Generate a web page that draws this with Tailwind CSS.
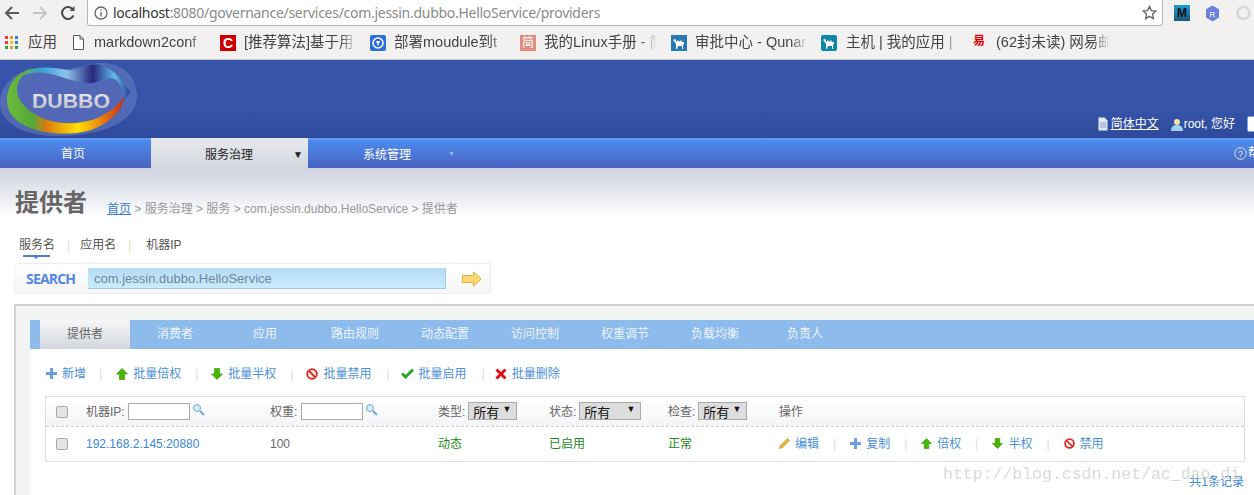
<!DOCTYPE html>
<html lang="en">
<head>
  <meta charset="UTF-8">
  <title>dubbo governance</title>
  <script src="https://cdn.jsdelivr.net/npm/@tailwindcss/browser@4"></script>
</head>
<body class="w-[1254px] h-[495px] overflow-hidden relative bg-white font-['Liberation_Sans','Noto_Sans_CJK_SC',sans-serif]">

  <!-- browser toolbar -->
  <div class="h-[27px] bg-[#f2f1f0] flex items-start">
    <div class="w-[87px] h-[26px] flex items-center shrink-0">
      <svg class="ml-[4px]" width="16" height="16" viewBox="0 0 16 16" fill="none" stroke="#5a5a5a" stroke-width="2"><path d="M15 8H2M8 2L2 8l6 6"/></svg>
      <svg class="ml-[12px]" width="16" height="16" viewBox="0 0 16 16" fill="none" stroke="#c4c4c4" stroke-width="2"><path d="M1 8h13M8 2l6 6-6 6"/></svg>
      <svg class="ml-[12px]" width="16" height="16" viewBox="0 0 16 16" fill="none" stroke="#4a4a4a" stroke-width="2"><path d="M13.5 10.5A6 6 0 1 1 13 4.5"/><path d="M14.5 1v5h-5" fill="#4a4a4a" stroke="none"/></svg>
    </div>
    <div class="w-[1076px] h-[26px] bg-white border border-t-0 border-[#b5b5b5] rounded-b-[3px] flex items-center shrink-0">
      <svg class="ml-[6px]" width="14" height="14" viewBox="0 0 14 14" fill="none" stroke="#666" stroke-width="1.3"><circle cx="7" cy="7" r="6"/><path d="M7 6v4.5M7 3.2v1.4"/></svg>
      <span class="ml-[5px] text-[14px] text-[#8a8a8a] font-['Noto_Sans',sans-serif] tracking-[-0.28px]"><span class="text-[#333]">localhost</span>:8080/governance/services/com.jessin.dubbo.HelloService/providers</span>
      <svg class="ml-auto mr-[5px]" width="15" height="15" viewBox="0 0 16 16" fill="none" stroke="#666" stroke-width="1.4"><path d="M8 1.5l2 4.5 4.8.5-3.6 3.2 1 4.8L8 12.1 3.800 14.5l1-4.800L1.200 6.500 6 6z"/></svg>
    </div>
    <div class="flex items-center h-[26px] ml-[11px] gap-[15px]">
      <div class="w-[16px] h-[16px] bg-[linear-gradient(#1c9fd6,#1c5a78)] text-[12px] font-bold text-[#111] text-center leading-[16px]">M</div>
      <svg width="15" height="17" viewBox="0 0 15 17"><path d="M7.5 0.5l6.500 3.700v8.200l-6.500 4-6.500-4V4.200z" fill="#6f7fe0"/><text x="7.500" y="11.500" font-size="8" fill="#fff" text-anchor="middle" font-family="Liberation Sans">R</text></svg>
      <svg width="17" height="16" viewBox="0 0 17 16" fill="none" stroke="#d8d8d8" stroke-width="2.500"><circle cx="8.500" cy="8" r="6"/></svg>
    </div>
  </div>

  <!-- bookmarks -->
  <div class="h-[33px] bg-[#f2f1f0] border-b border-[#c8c8c8] flex items-center text-[14.500px] text-[#444] pb-[1px] whitespace-nowrap">
    <div class="w-[72px] pl-[5px] flex items-center shrink-0">
      <div class="grid grid-cols-3 gap-[2px] w-[13px]">
        <i class="h-[3px] bg-[#d9432f]"></i><i class="h-[3px] bg-[#e8a020]"></i><i class="h-[3px] bg-[#3b78e7]"></i>
        <i class="h-[3px] bg-[#d9432f]"></i><i class="h-[3px] bg-[#e8c020]"></i><i class="h-[3px] bg-[#3b78e7]"></i>
        <i class="h-[3px] bg-[#2f9e48]"></i><i class="h-[3px] bg-[#e8a020]"></i><i class="h-[3px] bg-[#2f9e48]"></i>
      </div>
      <span class="ml-[10px]">应用</span>
    </div>
    <div class="w-[148px] flex items-center shrink-0">
      <svg class="ml-[1px]" width="11" height="15" viewBox="0 0 11 15" fill="#fff" stroke="#555"><path d="M.5.5h6.500l3.500 3.500v10.500H.5z"/><path d="M7 .5v3.500h3.500" fill="none"/></svg>
      <span class="ml-[10px] w-[112px] [mask-image:linear-gradient(90deg,#000_85%,transparent)]">markdown2conf</span>
    </div>
    <div class="w-[150px] flex items-center shrink-0">
      <div class="w-[16px] h-[16px] bg-[#cc0000] text-white font-bold text-[14px] leading-[16px] text-center">C</div>
      <span class="ml-[8px] w-[113px] [mask-image:linear-gradient(90deg,#000_85%,transparent)]">[推荐算法]基于用</span>
    </div>
    <div class="w-[150px] flex items-center shrink-0">
      <svg width="16" height="16" viewBox="0 0 16 16"><rect width="16" height="16" rx="2" fill="#2d6fe0"/><circle cx="8" cy="8" r="5" fill="none" stroke="#fff" stroke-width="1.500"/><path d="M6 6h4L8 11z" fill="#fff"/></svg>
      <span class="ml-[8px] w-[113px] [mask-image:linear-gradient(90deg,#000_85%,transparent)]">部署moudule到t</span>
    </div>
    <div class="w-[151px] flex items-center shrink-0">
      <div class="w-[16px] h-[16px] bg-[#e08d7f] text-white text-[12px] leading-[16px] text-center">简</div>
      <span class="ml-[8px] w-[113px] [mask-image:linear-gradient(90deg,#000_85%,transparent)]">我的Linux手册 - 简</span>
    </div>
    <div class="w-[150px] flex items-center shrink-0">
      <div class="w-[16px] h-[16px] bg-[#2a7ab8] flex items-center justify-center">
        <svg width="13" height="12" viewBox="0 0 13 12" fill="#fff"><path d="M0 3l2-1 1 1v2l2-2 1 2 2-2 1 2h2v2l-1 1v4h-1V9H5l-1 3H3V7L1 4z"/></svg>
      </div>
      <span class="ml-[8px] w-[113px] [mask-image:linear-gradient(90deg,#000_85%,transparent)]">审批中心 - Qunar</span>
    </div>
    <div class="w-[151px] flex items-center shrink-0">
      <div class="w-[16px] h-[16px] bg-[#1187a8] rounded-[2px] flex items-center justify-center">
        <svg width="13" height="12" viewBox="0 0 13 12" fill="#fff"><path d="M0 3l2-1 1 1v2l2-2 1 2 2-2 1 2h2v2l-1 1v4h-1V9H5l-1 3H3V7L1 4z"/></svg>
      </div>
      <span class="ml-[9px] w-[113px] [mask-image:linear-gradient(90deg,#000_85%,transparent)]">主机 | 我的应用 | </span>
    </div>
    <div class="w-[150px] flex items-center shrink-0">
      <div class="w-[14px] text-[#e60000] font-bold text-[12px] leading-[13px] text-center h-[16px]">易</div>
      <span class="ml-[10px] w-[114px] [mask-image:linear-gradient(90deg,#000_85%,transparent)]">(62封未读) 网易邮</span>
    </div>
  </div>

  <!-- site header -->
  <header class="h-[78px] bg-[linear-gradient(#3654a9_0%,#3654a9_60%,#2f4a9c_100%)] flex justify-between">
    <svg width="142" height="78" viewBox="0 0 142 78" class="shrink-0">
      <defs>
        <linearGradient id="ring" gradientUnits="userSpaceOnUse" x1="7" y1="0" x2="125" y2="0">
          <stop offset="0" stop-color="#6cbb3c"/><stop offset=".22" stop-color="#55a838"/><stop offset=".33" stop-color="#d97a10"/><stop offset=".6" stop-color="#ffe000"/><stop offset=".85" stop-color="#e06a10"/><stop offset="1" stop-color="#c02a20"/>
        </linearGradient>
        <linearGradient id="wave" gradientUnits="userSpaceOnUse" x1="20" y1="0" x2="130" y2="0">
          <stop offset="0" stop-color="#5cb04a"/><stop offset=".2" stop-color="#3aa0d6"/><stop offset=".42" stop-color="#8cc4ec"/><stop offset=".66" stop-color="#27277f"/><stop offset=".86" stop-color="#60bcea"/><stop offset="1" stop-color="#2b3f9a"/>
        </linearGradient>
        <linearGradient id="word" x1="0" y1="0" x2="0" y2="1"><stop offset="0" stop-color="#f2f2f5"/><stop offset="1" stop-color="#b4b4c0"/></linearGradient>
      </defs>
      <path d="M30 10C52 8 62 12 88 5c22-6 46 2 49 28 2 24-26 42-76 43C26 77-2 64 0 40 2 25 14 12 30 10z" fill="#7c8fcc" fill-opacity=".4"/>
      <path d="M36 14c20-2 30 8 52 8 14-1 24-8 30 2 7 14 2 28-18 36-22 8-52 8-66 0C16 52 14 26 36 14z" fill="#5268b6"/>
      <path d="M33 8C16 12 7 26 7 40C7 56 20 66 40 71C60 75 85 75 100 66C115 58 124 48 125 33C122 42 112 52 95 59C78 65 55 65 38 56C24 48 16 38 17 28C18 20 24 12 33 8Z" fill="url(#ring)"/>
      <path d="M20 16C28 6 50 6 67 10C76 11 84 6 90 5C102 3 115 8 130 32L124 42C124 30 118 17 110 18C100 20 96 24 86 23C70 22 50 10 33 13C28 14 24 15 20 16Z" fill="url(#wave)"/>
      <text x="32" y="48" font-size="21" font-weight="700" font-family="Liberation Sans" fill="url(#word)" textLength="78" lengthAdjust="spacingAndGlyphs">DUBBO</text>
    </svg>
    <div class="flex items-center self-end h-[28px] text-[12px] text-white whitespace-nowrap -mr-[7px]">
      <svg width="10" height="14" viewBox="0 0 10 14" fill="#dfe6f2" stroke="#8fa4d8" stroke-width=".6"><path d="M.5.5h6l3 3v10h-9z"/><path d="M2 6h6M2 8h6M2 10h6" stroke="#5a74b8"/></svg>
      <span class="ml-[3px] underline">简体中文</span>
      <svg class="ml-[12px]" width="12" height="13" viewBox="0 0 12 13"><circle cx="6" cy="4" r="3" fill="#f1e3a8"/><path d="M0 13c0-5 3-6 6-6s6 1 6 6z" fill="#9fd2ec"/></svg>
      <span class="ml-[1px]">root, 您好</span>
      <div class="ml-[12px] w-[14px] h-[16px] bg-white border border-[#7fa4e8] rounded-[2px]"></div>
    </div>
  </header>

  <!-- main nav -->
  <nav class="h-[30px] border-t-2 border-[#5f9af2] bg-[linear-gradient(#4d8cef,#4b62bf)] flex text-[12px] text-white">
    <div class="w-[151px] pl-[61px] flex items-center">首页</div>
    <div class="w-[157px] -mt-[2px] h-[32px] bg-[linear-gradient(#e8e9ec,#d0d6df)] text-[#222] pl-[54px] pr-[5px] flex items-center justify-between">
      <span class="mt-[2px]">服务治理</span><span class="text-[10px]">▼</span>
    </div>
    <div class="pl-[55px] flex items-center">
      <span class="mt-[1px]">系统管理</span><span class="ml-[37px] text-[7px] text-[#9db7ea]">▼</span>
    </div>
    <div class="ml-auto flex items-center -mr-[18px] -mt-[2px]">
      <svg width="13" height="13" viewBox="0 0 13 13" fill="none" stroke="#dfe6f5"><circle cx="6.500" cy="6.500" r="5.800"/><text x="6.500" y="9.800" font-size="9" fill="#dfe6f5" stroke="none" text-anchor="middle" font-family="Liberation Sans">?</text></svg>
      <span class="ml-[1px]">帮助</span>
    </div>
  </nav>

  <!-- page body -->
  <main class="bg-[linear-gradient(#cfd3e0,#fff_50px)] h-[327px] pl-[14px]">
    <div class="flex items-end h-[50px] pl-[1px]">
      <h1 class="text-[24px] leading-[30px] font-bold text-[#666]">提供者</h1>
      <div class="ml-[20px] pb-[1px] text-[12px] text-[#999] leading-[16px]"><a class="text-[#3a7fd5] underline">首页</a> &gt; 服务治理 &gt; 服务 &gt; com.jessin.dubbo.HelloService &gt; 提供者</div>
    </div>

    <div class="flex h-[45px] pt-[19px] pl-[5px] text-[12px] text-[#555] leading-[16px]">
      <div class="relative w-[36px]">服务名
        <div class="absolute left-[4px] top-[18px] w-[27px] h-[2px] bg-[#4a7fd8]"></div>
        <div class="absolute left-[15px] top-[20px] border-x-[2px] border-t-[2px] border-x-transparent border-t-[#4a7fd8]"></div>
      </div>
      <span class="ml-[12px] text-[#e5dcc8]">|</span>
      <span class="ml-[10px]">应用名</span>
      <span class="ml-[12px] text-[#e5dcc8]">|</span>
      <span class="ml-[15px]">机器IP</span>
    </div>

    <div class="w-[477px] h-[31px] border border-[#eee] rounded-[2px] bg-[linear-gradient(#fff,#f6f6f6)] flex items-center">
      <span class="ml-[11px] w-[62px] text-[14px] font-bold text-[#5287e4] font-['Open_Sans',sans-serif] tracking-[-0.8px]">SEARCH</span>
      <div class="w-[358px] h-[21px] bg-[linear-gradient(#b4dbf5,#c9ecfd)] border-r border-b border-[#a3c9e3] pl-[6px] text-[13px] text-[#75869a] leading-[21px]">com.jessin.dubbo.HelloService</div>
      <svg class="ml-[16px]" width="20" height="16" viewBox="0 0 20 16"><path d="M.5 4.500h11V.8L19.200 8l-7.700 7.200v-3.700H.5z" fill="#fbd874" stroke="#dfae3c"/></svg>
    </div>

    <!-- panel -->
    <section class="mt-[10px] h-[191px] border-t-2 border-l-2 border-[#d0d0d0] bg-[#f2f4f4] pl-[14px] pt-[14px]">
      <div class="bg-white h-[175px]">
        <div class="h-[29px] bg-[#8dbbec] pl-[10px] flex text-[12px] text-[#eef4fc] leading-[29px] text-center">
          <div class="w-[90px] bg-[linear-gradient(#f6f6f7,#d2d6dd)] text-[#666]">提供者</div>
          <div class="w-[90px]">消费者</div>
          <div class="w-[90px]">应用</div>
          <div class="w-[90px]">路由规则</div>
          <div class="w-[90px]">动态配置</div>
          <div class="w-[90px]">访问控制</div>
          <div class="w-[90px]">权重调节</div>
          <div class="w-[90px]">负载均衡</div>
          <div class="w-[90px]">负责人</div>
        </div>

        <div class="h-[47px] flex items-center pl-[16px] pt-[2px] text-[12px] text-[#4a90d9] whitespace-nowrap">
          <svg width="11" height="11" viewBox="0 0 11 11" fill="#6c9ee0"><path d="M4 0h3v4h4v3H7v4H4V7H0V4h4z"/></svg>
          <span class="ml-[5px]">新增</span>
          <span class="ml-[13px] mr-[14px] text-[#d5dbe4]">|</span>
          <svg width="12" height="12" viewBox="0 0 12 12" fill="#47b800" stroke="#2d8a00" stroke-width=".6"><path d="M6 .5L11.500 6H8.500v5.500h-5V6H.5z"/></svg>
          <span class="ml-[5px]">批量倍权</span>
          <span class="ml-[14px] mr-[13px] text-[#d5dbe4]">|</span>
          <svg width="12" height="12" viewBox="0 0 12 12" fill="#47b800" stroke="#2d8a00" stroke-width=".6"><path d="M6 11.500L.5 6h3V.5h5V6h3z"/></svg>
          <span class="ml-[5px]">批量半权</span>
          <span class="ml-[14px] mr-[13px] text-[#d5dbe4]">|</span>
          <svg width="12" height="12" viewBox="0 0 12 12" fill="none" stroke="#d93025" stroke-width="2"><circle cx="6" cy="6" r="4.800"/><path d="M2.800 2.800l6.400 6.400"/></svg>
          <span class="ml-[5px]">批量禁用</span>
          <span class="ml-[15px] mr-[11px] text-[#d5dbe4]">|</span>
          <svg width="13" height="11" viewBox="0 0 13 11" fill="none" stroke="#2aa82a" stroke-width="3"><path d="M1 5.500l3.500 3.500L12 1.500"/></svg>
          <span class="ml-[5px]">批量启用</span>
          <span class="ml-[15px] mr-[10px] text-[#d5dbe4]">|</span>
          <svg width="12" height="12" viewBox="0 0 12 12" fill="none" stroke="#e01010" stroke-width="3"><path d="M1.500 1.500l9 9M10.500 1.500l-9 9"/></svg>
          <span class="ml-[5px]">批量删除</span>
        </div>

        <!-- table -->
        <div class="ml-[15px] mr-[10px] w-[1200px] h-[66px] border-[1.500px] border-[#ddd] text-[12px]">
          <div class="h-[30px] bg-[linear-gradient(#fff,#f3f4f6)] border-b border-dashed border-[#ccc] grid grid-cols-[40px_184px_168px_111px_119px_111px_1fr] items-center text-[#666] whitespace-nowrap">
            <input type="checkbox" class="appearance-none ml-[10px] w-[12px] h-[12px] rounded-[2px] border border-[#aaa] bg-[#e4e4e4]">
            <div class="flex items-center">机器IP:<span class="ml-[3px] w-[62px] h-[17px] bg-white border border-[#aaa]"></span><svg class="ml-[2px] -mt-[4px]" width="13" height="13" viewBox="0 0 13 13" fill="#d8ecfa" stroke="#6fa8d8"><circle cx="5" cy="5" r="3.500"/><path d="M8 8l4 4" stroke-width="2"/></svg></div>
            <div class="flex items-center">权重:<span class="ml-[4px] w-[62px] h-[17px] bg-white border border-[#aaa]"></span><svg class="ml-[2px] -mt-[4px]" width="13" height="13" viewBox="0 0 13 13" fill="#d8ecfa" stroke="#6fa8d8"><circle cx="5" cy="5" r="3.500"/><path d="M8 8l4 4" stroke-width="2"/></svg></div>
            <div class="flex items-center">类型:<span class="ml-[3px] w-[49px] h-[18px] bg-[#ddd] border border-[#aaa] text-[13px] text-[#111] leading-[20px] pl-[4px] relative -mt-[1px]">所有<i class="absolute right-[5px] top-0 text-[9px] not-italic leading-[13px]">▼</i></span></div>
            <div class="flex items-center">状态:<span class="ml-[3px] w-[62px] h-[18px] bg-[#ddd] border border-[#aaa] text-[13px] text-[#111] leading-[20px] pl-[4px] relative -mt-[1px]">所有<i class="absolute right-[5px] top-0 text-[9px] not-italic leading-[13px]">▼</i></span></div>
            <div class="flex items-center">检查:<span class="ml-[3px] w-[49px] h-[18px] bg-[#ddd] border border-[#aaa] text-[13px] text-[#111] leading-[20px] pl-[4px] relative -mt-[1px]">所有<i class="absolute right-[5px] top-0 text-[9px] not-italic leading-[13px]">▼</i></span></div>
            <div>操作</div>
          </div>
          <div class="h-[33px] grid grid-cols-[40px_184px_168px_111px_119px_111px_1fr] items-center whitespace-nowrap">
            <input type="checkbox" class="appearance-none ml-[10px] w-[12px] h-[12px] rounded-[2px] border border-[#aaa] bg-[#e4e4e4]">
            <a class="text-[#3a88d8]">192.168.2.145:20880</a>
            <div class="text-[#666]">100</div>
            <div class="text-[#1c8a1c]">动态</div>
            <div class="text-[#1c8a1c]">已启用</div>
            <div class="text-[#1c8a1c]">正常</div>
            <div class="flex items-center text-[#4a90d9]">
              <svg width="11" height="11" viewBox="0 0 11 11"><path d="M8.500.5l2 2L3 10l-2.500.5L1 8z" fill="#f0b030" stroke="#b88a20" stroke-width=".5"/></svg>
              <span class="ml-[5px]">编辑</span>
              <span class="ml-[14px] mr-[14px] text-[#d5dbe4]">|</span>
              <svg width="11" height="11" viewBox="0 0 11 11" fill="#6c9ee0"><path d="M4 0h3v4h4v3H7v4H4V7H0V4h4z"/></svg>
              <span class="ml-[5px]">复制</span>
              <span class="ml-[14px] mr-[14px] text-[#d5dbe4]">|</span>
              <svg width="11" height="11" viewBox="0 0 12 12" fill="#47b800" stroke="#2d8a00" stroke-width=".6"><path d="M6 .5L11.500 6H8.500v5.500h-5V6H.5z"/></svg>
              <span class="ml-[5px]">倍权</span>
              <span class="ml-[14px] mr-[14px] text-[#d5dbe4]">|</span>
              <svg width="11" height="11" viewBox="0 0 12 12" fill="#47b800" stroke="#2d8a00" stroke-width=".6"><path d="M6 11.500L.5 6h3V.5h5V6h3z"/></svg>
              <span class="ml-[5px]">半权</span>
              <span class="ml-[14px] mr-[14px] text-[#d5dbe4]">|</span>
              <svg width="11" height="11" viewBox="0 0 12 12" fill="none" stroke="#d93025" stroke-width="2"><circle cx="6" cy="6" r="4.800"/><path d="M2.800 2.800l6.400 6.400"/></svg>
              <span class="ml-[5px]">禁用</span>
            </div>
          </div>
        </div>
        <div class="w-[1214px] text-right text-[12px] text-[#3a88d8] leading-[16px] mt-[12px]">共1条记录</div>
      </div>
    </section>
  </main>

  <!-- image watermark -->
  <div class="absolute left-[943px] top-[464px] text-[16.500px] leading-[22px] text-[#d2d2c8]/80 font-['Liberation_Mono',monospace] whitespace-nowrap">http://blog.csdn.net/ac_dao_di</div>
</body>
</html>
